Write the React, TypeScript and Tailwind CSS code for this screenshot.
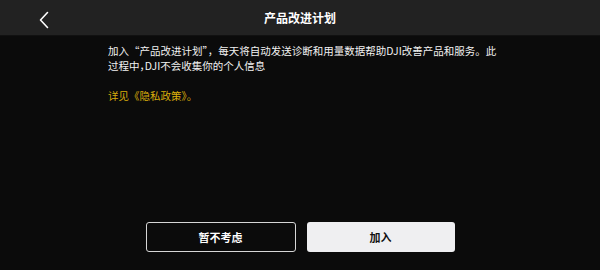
const font = { fontFamily: '"Noto Sans CJK SC", "Noto Sans", sans-serif' };

const ChevronLeft = () => (
  <svg width="10" height="18" viewBox="0 0 10 18" fill="none">
    <path d="M8.5 1.5 L1.5 9 L8.5 16.5" stroke="#ffffff" strokeWidth="1.6" strokeLinecap="round" strokeLinejoin="round" />
  </svg>
);

export default function App() {
  return (
    <div
      className="flex h-[270px] w-[600px] flex-col overflow-hidden bg-[#0b0b0b] text-white"
      style={font}
    >
      {/* header */}
      <div className="relative flex h-9 items-center justify-center border-b border-[#111] bg-[#222222]">
        <button className="absolute left-[39px] top-[11px]">
          <ChevronLeft />
        </button>
        <h1 className="text-[12px] font-bold leading-none">产品改进计划</h1>
      </div>

      {/* body */}
      <div className="flex-1 pl-[108px] pt-[7px]">
        <p className="whitespace-nowrap text-[10.5px] leading-[15px] text-[#f2f2f2]">
          加入“产品改进计划”，每天将自动发送诊断和用量数据帮助DJI改善产品和服务。此
          <br />
          过程中<span className="[font-feature-settings:'halt']">，</span>DJI不会收集你的个人信息
        </p>
        <p className="mt-[15px] text-[10.5px] leading-[16px] text-[#d9ab0c]">详见《隐私政策》。</p>
      </div>

      {/* actions */}
      <div className="flex justify-center gap-[11px] pb-[18px]">
        <button className="h-[30px] w-[150px] rounded-[3px] border border-[#d6d6d6] text-[11px] font-bold text-white">
          暂不考虑
        </button>
        <button className="h-[30px] w-[148px] rounded-[3px] bg-[#efeff1] text-[11px] font-bold text-[#111]">
          加入
        </button>
      </div>
    </div>
  );
}
